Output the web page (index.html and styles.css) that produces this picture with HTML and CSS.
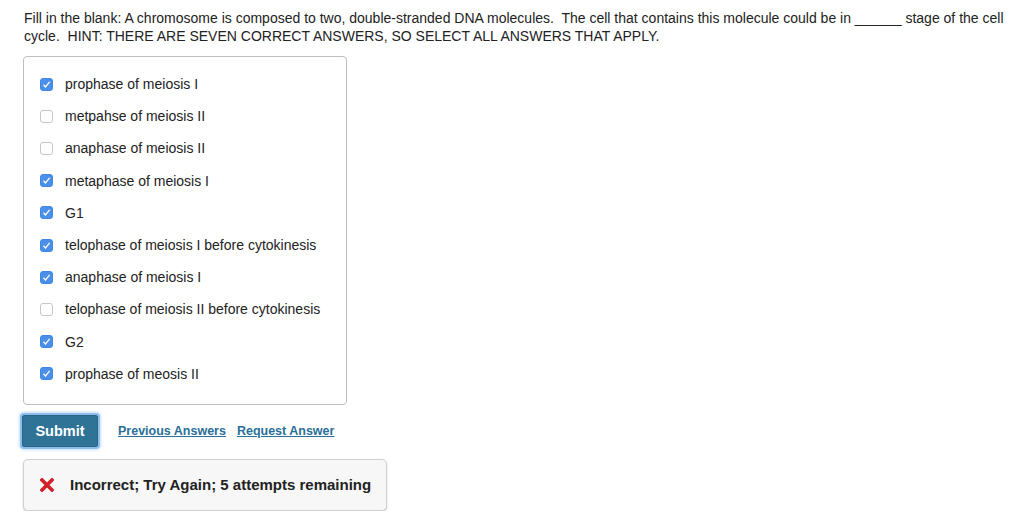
FILE: index.html
```html
<!DOCTYPE html>
<html lang="en">
<head>
    <meta charset="UTF-8">
    <title>Fill in the blank</title>
    <link rel="stylesheet" href="styles.css">
</head>
<body>
    <div class="problem">
        <p class="question">Fill in the blank: A chromosome is composed to two, double-stranded DNA molecules.&nbsp; The cell that contains this molecule could be in ______ stage of the cell cycle.&nbsp; HINT: THERE ARE SEVEN CORRECT ANSWERS, SO SELECT ALL ANSWERS THAT APPLY.</p>

        <div class="options">
            <label class="option"><span class="box checked"></span>prophase of meiosis I</label>
            <label class="option"><span class="box"></span>metpahse of meiosis II</label>
            <label class="option"><span class="box"></span>anaphase of meiosis II</label>
            <label class="option"><span class="box checked"></span>metaphase of meiosis I</label>
            <label class="option"><span class="box checked"></span>G1</label>
            <label class="option"><span class="box checked"></span>telophase of meiosis I before cytokinesis</label>
            <label class="option"><span class="box checked"></span>anaphase of meiosis I</label>
            <label class="option"><span class="box"></span>telophase of meiosis II before cytokinesis</label>
            <label class="option"><span class="box checked"></span>G2</label>
            <label class="option"><span class="box checked"></span>prophase of meosis II</label>
        </div>

        <div class="actions">
            <button class="submit">Submit</button>
            <a href="#" class="link">Previous Answers</a>
            <a href="#" class="link">Request Answer</a>
        </div>

        <div class="feedback">
            <svg class="cross" width="14" height="14" viewBox="0 0 14 14">
                <path d="M2 2 L12 12 M12 2 L2 12" stroke="#d0202a" stroke-width="3.6" stroke-linecap="square"/>
            </svg>
            <span>Incorrect; Try Again; 5 attempts remaining</span>
        </div>
    </div>
</body>
</html>
```

FILE: styles.css
```css
* {
    margin: 0;
    padding: 0;
    box-sizing: border-box;
}

body {
    font-family: 'Liberation Sans', Arial, sans-serif;
    color: #222;
    background: #ffffff;
}

.problem {
    padding: 9px 0 0 24px;
}

.question {
    font-size: 14px;
    line-height: 18px;
    max-width: 990px;
}

.options {
    width: 324px;
    margin: 11px 0 0 -1px;
    padding: 11px 0 14px 16px;
    border: 1px solid #bdbdbd;
    border-radius: 4px;
}

.option {
    display: flex;
    align-items: center;
    height: 32.2px;
    font-size: 14px;
}

.box {
    width: 13px;
    height: 13px;
    margin-right: 12px;
    border: 1px solid #c6c6c6;
    border-radius: 3px;
    background: #fff;
}

.box.checked {
    border-color: #3f87e6;
    background: #4a90e8 url("data:image/svg+xml;utf8,<svg xmlns='http://www.w3.org/2000/svg' viewBox='0 0 13 13'><path d='M3.5 6.8 L5.5 9 L9.6 3.8' fill='none' stroke='white' stroke-width='1.3'/></svg>") center / 13px 13px no-repeat;
}

.actions {
    display: flex;
    align-items: center;
    margin-top: 10px;
    margin-left: -2px;
}

.submit {
    width: 76px;
    height: 32px;
    background: #2f7396;
    color: #fff;
    font-family: 'Liberation Sans', Arial, sans-serif;
    font-size: 14.5px;
    font-weight: bold;
    border: 1px solid #2a6587;
    border-radius: 2px;
    box-shadow: 0 0 0 2px #8cbff0, 0 0 3px 3px rgba(120, 170, 240, 0.4);
    margin-right: 20px;
}

.link {
    font-size: 12.5px;
    font-weight: bold;
    color: #2a6f98;
    margin-right: 11px;
}

.feedback {
    display: flex;
    align-items: center;
    width: 364px;
    height: 52px;
    margin-top: 12px;
    margin-left: -1px;
    padding-left: 16px;
    background: #f7f7f7;
    border: 1px solid #d0d0d0;
    border-radius: 5px;
    box-shadow: 0 1px 2px rgba(0, 0, 0, 0.2);
    font-size: 15px;
    font-weight: bold;
    color: #222;
}

.cross {
    margin-right: 16px;
}
```
